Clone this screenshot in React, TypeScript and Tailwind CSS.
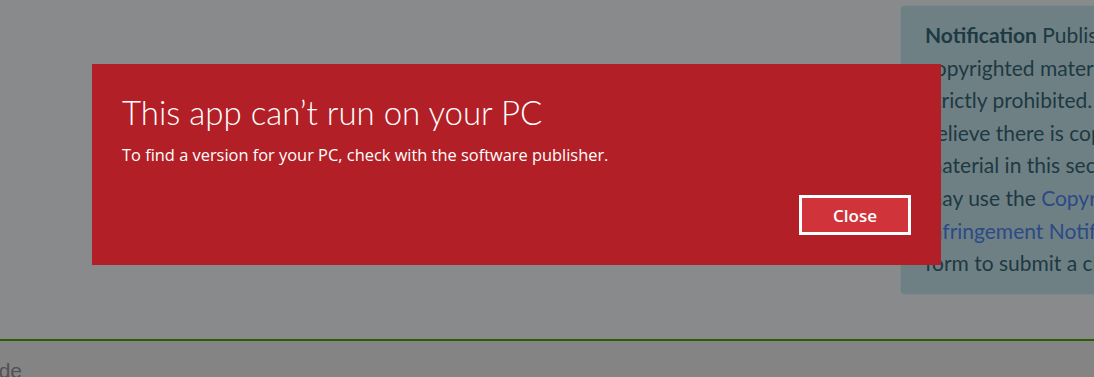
const noticeLines = [
  { text: 'copyrighted material' },
  { text: 'strictly prohibited. If you' },
  { text: 'believe there is copyrighted' },
  { text: 'material in this section, you' },
  { text: 'may use the ', link: 'Copyright' },
  { text: '', link: 'Infringement Notification' },
  { text: 'form to submit a claim.' },
];

function Notice() {
  return (
    <div className="mt-[5px] ml-[900px] w-[260px] shrink-0 h-[290px] rounded-l-[5px] border border-r-0 border-[#7a8a8f] bg-[#6f8085] pl-[24px] pt-[13px]">
      <div className="font-['Lato',sans-serif] text-[21px] leading-[32.6px] text-[#1d3942] whitespace-nowrap">
        <div>
          <span className="font-bold">Notification</span> Publishing
        </div>
        {noticeLines.map((l, i) => (
          <div key={i}>
            {l.text}
            {l.link && <span className="text-[#2b4a86]">{l.link}</span>}
          </div>
        ))}
      </div>
    </div>
  );
}

function ErrorDialog() {
  return (
    <div className="absolute left-[92px] top-[64px] w-[849px] h-[201px] bg-[#b31f26] text-white">
      <div className="pl-[30px] pt-[26px]">
        <h1 className="font-['Lato',sans-serif] text-[33px] leading-[44px] font-light">This app can’t run on your PC</h1>
        <p className="mt-[10px] font-['Open_Sans',sans-serif] text-[16.4px] leading-[22px]">To find a version for your PC, check with the software publisher.</p>
      </div>
      <div className="flex justify-end pr-[30px] mt-[29px]">
        <button className="w-[112px] h-[40px] border-[3px] border-white bg-[#d0343a] font-['Open_Sans',sans-serif] text-[17px] font-semibold leading-none">
          Close
        </button>
      </div>
    </div>
  );
}

export default function App() {
  return (
    <div className="relative w-[1094px] h-[377px] overflow-hidden bg-[#898a8c]">
      <div className="flex h-[339px]">
        <Notice />
      </div>
      <div className="h-[2px] bg-[#2b5c06]" />
      <div className="h-[36px] bg-[#848484] pt-[15px]">
        <span className="block -ml-[13px] font-['Liberation_Sans',sans-serif] text-[21px] leading-[30px] text-[#525252]">ode</span>
      </div>
      <ErrorDialog />
    </div>
  );
}
